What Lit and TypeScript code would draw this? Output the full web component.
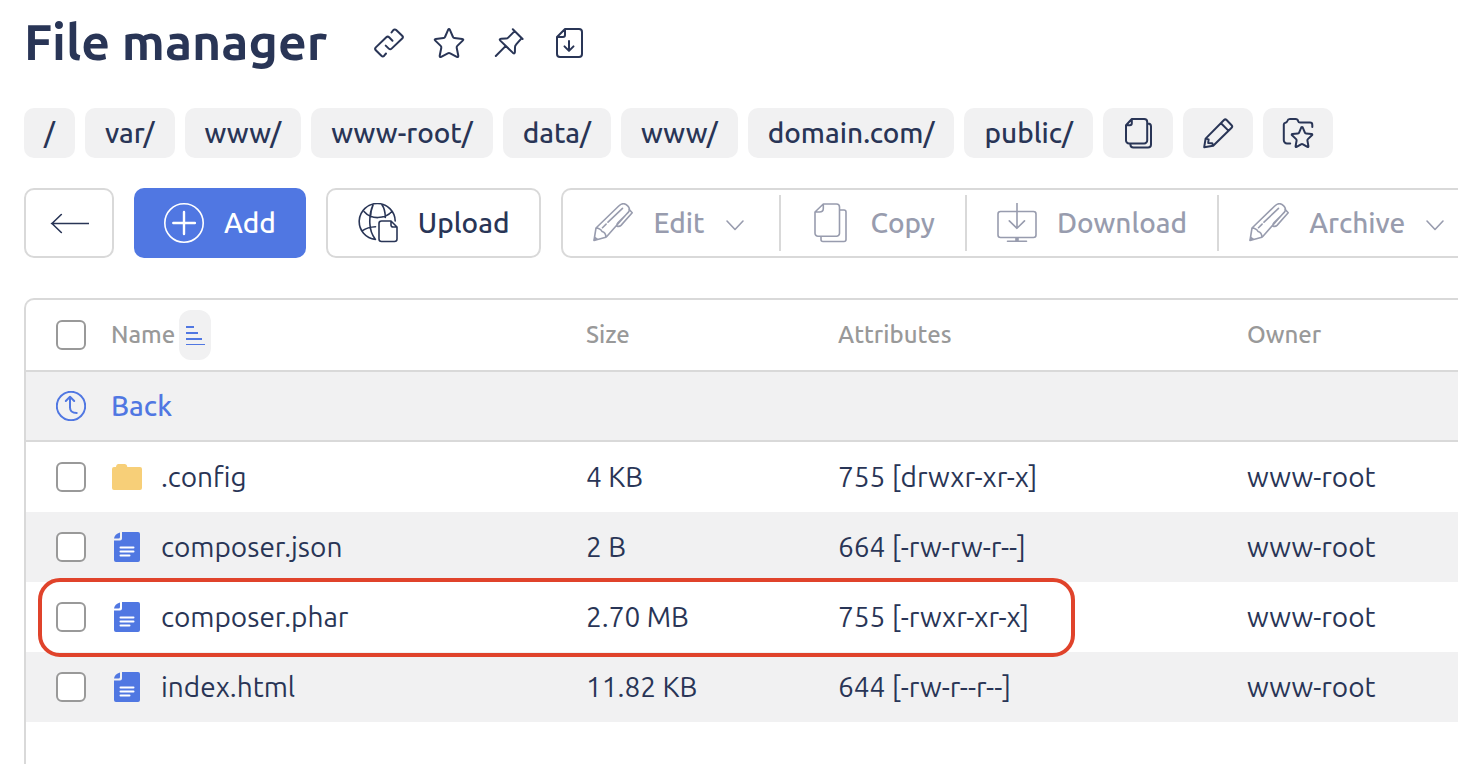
import { LitElement, html, svg, css, nothing } from "lit";
import { customElement } from "lit/decorators.js";
import { classMap } from "lit/directives/class-map.js";

const icon = (size: number, cls: string, body: unknown) =>
  html`<svg class=${cls} width=${size} height=${size} viewBox="0 0 ${size} ${size}" aria-hidden="true">${body}</svg>`;

const link = svg`<path d="M18.5 5.5l1.8-2.4a2 2 0 0 1 2.9-.1l6 5.7a2 2 0 0 1 0 2.8L18.6 21.6a2 2 0 0 1-2.8 0l-3.1-3M19.5 13.7l-3.4-3.4a2 2 0 0 0-2.8 0L2.8 20.4a2 2 0 0 0 0 2.8l5.600 5.600a2 2 0 0 0 2.800-.1l1.800-2.200"/>`;
const star = svg`<path d="M15.1 2.8Q16 1.2 16.900 2.800L20 10q.4 1 1.400 1.100l7.800.8q1.900.3.500 1.700l-5.400 5.300q-.8.8-.6 1.800l1.600 8q.2 1.900-1.500 1.100l-6.600-3.400q-1.200-.6-2.400 0l-6.600 3.400q-1.700.8-1.500-1.100l1.600-8q.2-1-.6-1.800l-5.400-5.300q-1.400-1.400.5-1.700l7.800-.8q1-.1 1.400-1.100z"/>`;
const pin = svg`<path d="M19.8 2.300l9.800 9.700M21.400 4.400l-6.200 6.200q-1 1-2.500.9l-4.600.2q-2.200.3-.8 1.900l12.700 12.300q1.700 1.400 1.900-.7l.1-5q0-1.500 1-2.500l5.700-6.600M12.800 18.900L2.800 29"/>`;
const saveFile = svg`<path d="M12 2h14a3 3 0 0 1 3 3v22a3 3 0 0 1-3 3H7a3 3 0 0 1-3-3V10zM12 2v6a2 2 0 0 1-2 2H4M16 14v9.500M11.500 19.400l4.500 4.500 4.500-4.500"/>`;
const pages = svg`<path d="M9.800 2h12.400a3 3 0 0 1 3 3v18.400a3 3 0 0 1-3 3H7a3 3 0 0 1-3-3V8.200zM9.800 2v4.200a2 2 0 0 1-2 2H4M25.200 6.500h.8a3 3 0 0 1 3 3v18a3 3 0 0 1-3 3H11.400a3 3 0 0 1-3-3v-.9"/>`;
const pencil = svg`<path d="M2.200 30.200l1.400-8.600L22 3q1.300-1.300 2.600 0l5 5.200q1.200 1.300 0 2.500L11.200 28.800zM19 6.200l7.400 7.400M3.800 21.600l2.800.8-.4 3.600 4 .2 1 2.600"/>`;
const folderStar = svg`<path d="M8.200 26.400H5a3.200 3.200 0 0 1-3.200-3.200V7.600q0-1.600 1.600-1.900 1.400-.2 1.900-1.700.6-2 2.600-2h5.700q2 0 2.500 2 .4 1.600 1.900 1.600H28q2.300 0 2.300 2.300v2M20 10q.5-.2.9.8l2 4.800q.3.8 1.200.9l5.400.6q1.400.2.4 1.200l-4 3.800q-.6.6-.5 1.400l1 5.600q.2 1.400-1 .8l-4.400-2.600q-1-.6-2 0l-4.400 2.600q-1.200.6-1-.8l1-5.600q.1-.8-.5-1.400l-4-3.800q-1-1 .4-1.200l5.400-.6q.9-.1 1.200-.9l2-4.800q.4-1 .9-.8z"/>`;

const arrowLeft = svg`<path d="M2.500 20.500H40M12.300 11.500L3 20.500l9.300 9"/>`;
const plus = svg`<circle cx="20" cy="20" r="19.2"/><path class="bold" d="M9.300 20h21.600M20 9v22"/>`;
const globe = svg`<path d="M37.200 18A18 18 0 1 0 17.400 36.400M15 2.200C12.200 8 11.600 14 11.800 20 12 26 14 32 17.400 36.400M15 2.200C13.300 6 12.700 9.500 12.500 14M23.800 1.500C26.300 5 27.300 9 27.300 14.500M6.300 8.700C13 16.600 26.600 16.600 34.200 8.300M4.500 27.700C8 25.200 12.500 24 17.500 23.800M33 18H23.500a2.500 2.500 0 0 0-2.500 2.500v15.500a2.500 2.500 0 0 0 2.500 2.500h13a2.500 2.500 0 0 0 2.500-2.500V24zM33 18v3.800a2 2 0 0 0 2 2.200h4"/>`;
const marker = svg`<path d="M3 25L25.500 3.200c3-3 6.500-3 9.200-.4 2 2 2.400 4 .9 6L14 33.200c-.8 1-1.600 1.300-3 1.600L1 37.400zM3 25c3.500.2 5 1.400 6 3.500 2.400.6 3.700 2 3.900 5.200M9.500 24.700l3.600-3.600M15 19.200L29.500 5.300M36 6.200l3.200 3.600L28 22.400q-1.500 1.500-4 .8-.6-2 .9-3.500L35.500 9.200"/><path class="solid" d="M1.600 33.300l3.600 2.800-4.700 1.600z"/>`;
const copyPages = svg`<path d="M12.300 1h13.200a3 3 0 0 1 3 3v26.300a3 3 0 0 1-3 3H7a3 3 0 0 1-3-3V9zM12.300 1v4.500Q12.300 9 8.500 9H4M28.500 7H33a2 2 0 0 1 2 2v27.500a2 2 0 0 1-2 2H12a2 2 0 0 1-2-2v-3.200"/>`;
const monitor = svg`<rect x="1" y="8.500" width="38" height="26" rx="2.500"/><path d="M20 0v25.300M12.300 17.900l7.700 7.400 7.500-7.400M10.500 38.300h19"/><path class="solid" d="M18.200 34.500h3.600v4h-3.600z"/>`;
const chevron = svg`<path d="M2 8l8 8.500L18 8"/>`;
const up = svg`<circle cx="15" cy="15" r="14.200"/><path d="M14 6v10.500q0 5.500 6.700 5.500M9.800 10L14 5.800 18.200 10"/>`;
const folder = svg`<path fill="#f7cf78" d="M3 6h2q.3-3 2.500-3h6Q16 3 16.300 6H29q2 0 2 2v19q0 2-2 2H3q-2 0-2-2V8q0-2 2-2z"/>`;
const doc = svg`<path fill="#5077e2" d="M11 1h16q2 0 2 2v26q0 2-2 2H5q-2 0-2-2V9.500h6Q11 9.500 11 7.500z"/><path fill="#5077e2" d="M9 1.500V6q0 1.500-1.500 1.500H3Q3.600 3 9 1.500z"/><path class="docline" d="M9.500 16.500h13M9.500 20.500h13M9.500 24.500h9"/>`;
const sort = svg`<path d="M7 17h8M7 23h12M7 29h16"/><path class="thin" d="M7 34.500h19"/>`;

const crumbs = ["/", "var/", "www/", "www-root/", "data/", "www/", "domain.com/", "public/"];

const files = [
  { name: ".config", dir: true, size: "4 KB", attrs: "755 [drwxr-xr-x]", owner: "www-root", marked: false },
  { name: "composer.json", dir: false, size: "2 B", attrs: "664 [-rw-rw-r--]", owner: "www-root", marked: false },
  { name: "composer.phar", dir: false, size: "2.70 MB", attrs: "755 [-rwxr-xr-x]", owner: "www-root", marked: true },
  { name: "index.html", dir: false, size: "11.82 KB", attrs: "644 [-rw-r--r--]", owner: "www-root", marked: false },
];

const actions = [
  { label: "Edit", glyph: marker, menu: true },
  { label: "Copy", glyph: copyPages, menu: false },
  { label: "Download", glyph: monitor, menu: false },
  { label: "Archive", glyph: marker, menu: true },
];

@customElement("app-root")
export class AppRoot extends LitElement {
  static styles = css`
    :host {
      display: flex;
      flex-direction: column;
      min-height: 100vh;
      box-sizing: border-box;
      padding: 8px 0 0 24px;
      overflow: hidden;
      background: #fff;
      color: #293556;
      font: 28px/32px Ubuntu, "Noto Sans", sans-serif;
    }
    *, *::before { box-sizing: border-box; }
    button {
      font: inherit;
      color: inherit;
      background: none;
      border: 0;
      margin: 0;
      padding: 0;
      cursor: pointer;
      display: flex;
      align-items: center;
      justify-content: center;
    }
    a { color: inherit; text-decoration: none; }
    svg {
      display: block;
      flex: none;
      fill: none;
      stroke: currentColor;
      stroke-width: 2;
      stroke-linecap: round;
      stroke-linejoin: round;
    }
    .fine { stroke-width: 1.6; }
    .bold { stroke-width: 2.4; }
    .thin { stroke-width: 1; }
    .solid { fill: currentColor; stroke: none; }
    .file { stroke: none; }
    .docline { stroke: #fff; stroke-width: 2; }

    .head { display: flex; align-items: center; gap: 46px; }
    h1 { margin: 0; padding-bottom: 4px; font-size: 50px; line-height: 66px; font-weight: 700; white-space: nowrap; }
    .tools { display: flex; gap: 28px; }

    .crumbs { display: flex; flex-wrap: wrap; gap: 10px; margin-top: 30px; font-weight: 500; }
    .crumb {
      height: 50px;
      padding: 0 20px;
      border-radius: 10px;
      background: #f1f1f2;
      display: flex;
      align-items: center;
      white-space: nowrap;
    }
    .square { width: 70px; padding: 0; }

    .toolbar { display: flex; gap: 20px; margin-top: 30px; font-weight: 500; }
    .btn {
      height: 70px;
      flex: none;
      gap: 20px;
      padding: 0 30px;
      border: 2px solid #d9d9d9;
      border-radius: 10px;
    }
    .back { width: 90px; padding: 0; }
    .primary { background: #5077e2; border: 0; color: #fff; }
    .group {
      flex: 1 0 0;
      min-width: 0;
      display: flex;
      align-items: center;
      height: 70px;
      overflow: hidden;
      border: 2px solid #d9d9d9;
      border-right: 0;
      border-radius: 10px 0 0 10px;
    }
    .action {
      flex: none;
      height: 56px;
      gap: 20px;
      padding: 0 30px;
      color: #989cae;
    }
    .action + .action { border-left: 2px solid #d9d9d9; }
    .menu { padding-right: 34px; }

    .panel {
      flex: 1;
      margin-top: 40px;
      border: solid #d9d9d9;
      border-width: 2px 0 0 2px;
      border-radius: 10px 0 0 0;
      overflow: hidden;
    }
    table { width: 100%; table-layout: fixed; border-collapse: separate; border-spacing: 0; }
    .c-check { width: 85px; }
    .c-name { width: 475px; }
    .c-size { width: 252px; }
    .c-attrs { width: 409px; }
    th, td { padding: 0; height: 70px; text-align: left; vertical-align: middle; white-space: nowrap; }
    th { height: 72px; font-weight: 500; font-size: 24px; color: #999; border-bottom: 2px solid #d9d9d9; }
    .pick { padding-left: 30px; }
    .label { display: flex; align-items: center; gap: 4px; }
    .sort { width: 32px; height: 50px; border-radius: 12px; background: #f1f1f2; color: #5077e2; }
    .sort svg { stroke-linecap: butt; }
    .up td { background: #f1f1f2; border-bottom: 2px solid #d9d9d9; color: #5077e2; font-weight: 500; }
    .alt td { background: #f1f1f2; }
    .name { display: flex; align-items: center; gap: 18px; }
    input {
      appearance: none;
      display: block;
      width: 30px;
      height: 30px;
      margin: 0;
      border: 2px solid #999;
      border-radius: 6px;
      background: #fff;
    }
    input:checked { background: #5077e2; }
    .row { position: relative; }
    .mark {
      position: absolute;
      z-index: 1;
      left: 12px;
      top: -4px;
      bottom: -5px;
      width: 1037px;
      border: 4px solid #e0432b;
      border-radius: 22px;
      pointer-events: none;
    }
  `;

  render() {
    return html`
      <header class="head">
        <h1>File manager</h1>
        <div class="tools">
          <button aria-label="Copy link">${icon(32, "", link)}</button>
          <button aria-label="Add to favorites">${icon(32, "", star)}</button>
          <button aria-label="Pin">${icon(32, "", pin)}</button>
          <button aria-label="Save">${icon(32, "", saveFile)}</button>
        </div>
      </header>

      <nav class="crumbs" aria-label="Path">
        ${crumbs.map((c) => html`<a class="crumb" href="#">${c}</a>`)}
        <button class="crumb square" aria-label="Copy path">${icon(32, "", pages)}</button>
        <button class="crumb square" aria-label="Edit path">${icon(32, "", pencil)}</button>
        <button class="crumb square" aria-label="Favorite folders">${icon(32, "", folderStar)}</button>
      </nav>

      <div class="toolbar">
        <button class="btn back" aria-label="Go back">${icon(40, "fine", arrowLeft)}</button>
        <button class="btn primary">${icon(40, "fine", plus)}Add</button>
        <button class="btn">${icon(40, "fine", globe)}Upload</button>
        <div class="group">
          ${actions.map(
            (a) => html`<button class=${classMap({ action: true, menu: a.menu })}>
              ${icon(40, "fine", a.glyph)}<span>${a.label}</span>${a.menu ? icon(20, "fine", chevron) : nothing}
            </button>`
          )}
        </div>
      </div>

      <main class="panel">
        <table>
          <colgroup>
            <col class="c-check" /><col class="c-name" /><col class="c-size" /><col class="c-attrs" /><col />
          </colgroup>
          <thead>
            <tr>
              <th class="pick"><input type="checkbox" aria-label="Select all" /></th>
              <th>
                <div class="label">
                  Name
                  <button class="sort" aria-label="Sort by name">
                    <svg width="32" height="50" viewBox="0 0 32 50" aria-hidden="true">${sort}</svg>
                  </button>
                </div>
              </th>
              <th>Size</th>
              <th>Attributes</th>
              <th>Owner</th>
            </tr>
          </thead>
          <tbody>
            <tr class="up">
              <td class="pick">${icon(30, "", up)}</td>
              <td colspan="4"><a href="#">Back</a></td>
            </tr>
            ${files.map(
              (f, i) => html`<tr class=${classMap({ row: true, alt: i % 2 === 1 })}>
                <td class="pick">
                  <input type="checkbox" id="f${i}" />
                  ${f.marked ? html`<span class="mark"></span>` : nothing}
                </td>
                <td>
                  <label class="name" for="f${i}">${icon(32, "file", f.dir ? folder : doc)}${f.name}</label>
                </td>
                <td>${f.size}</td>
                <td>${f.attrs}</td>
                <td>${f.owner}</td>
              </tr>`
            )}
          </tbody>
        </table>
      </main>
    `;
  }
}
